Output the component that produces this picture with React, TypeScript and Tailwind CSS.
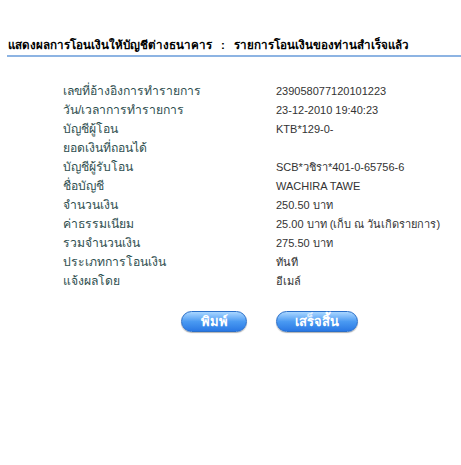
const rows: [string, string][] = [
  ['เลขที่อ้างอิงการทำรายการ', '239058077120101223'],
  ['วัน/เวลาการทำรายการ', '23-12-2010 19:40:23'],
  ['บัญชีผู้โอน', 'KTB*129-0-'],
  ['ยอดเงินที่ถอนได้', ''],
  ['บัญชีผู้รับโอน', 'SCB*วชิรา*401-0-65756-6'],
  ['ชื่อบัญชี', 'WACHIRA TAWE'],
  ['จำนวนเงิน', '250.50 บาท'],
  ['ค่าธรรมเนียม', '25.00 บาท (เก็บ ณ วันเกิดรายการ)'],
  ['รวมจำนวนเงิน', '275.50 บาท'],
  ['ประเภทการโอนเงิน', 'ทันที'],
  ['แจ้งผลโดย', 'อีเมล์'],
]

function PillButton({ label, width }: { label: string; width: string }) {
  return (
    <button
      className={`${width} h-[21px] rounded-full border border-[#2a6fc9] bg-gradient-to-b from-[#a9d6ff] via-[#4a9af2] to-[#2a78e4] text-white text-[13px] font-semibold leading-none shadow-[0_1px_1px_rgba(0,0,0,0.3)]`}
    >
      {label}
    </button>
  )
}

export default function App() {
  return (
    <div className="w-[461px] h-[465px] bg-white font-['Tahoma','Liberation_Sans',sans-serif]">
      <div className="pt-[37px] pl-[7px]">
        <h1 className="flex text-[11.6px] font-bold text-black leading-[16px] pl-px">
          <span>แสดงผลการโอนเงินให้บัญชีต่างธนาคาร</span>
          <span className="mx-[9px]">:</span>
          <span>รายการโอนเงินของท่านสำเร็จแล้ว</span>
        </h1>
        <div className="mt-[2px] h-[2px] bg-[#8db4e3]" />
      </div>

      <div className="mt-[25px] pl-[63px]">
        {rows.map(([label, value]) => (
          <div key={label} className="flex h-[19px] items-center">
            <div className="w-[213px] text-[12.2px] text-[#2f4f4f]">{label}</div>
            <div className="text-[11px] text-[#333]">{value}</div>
          </div>
        ))}
      </div>

      <div className="mt-[20px] flex gap-[29px] pl-[181px]">
        <PillButton label="พิมพ์" width="w-[66px]" />
        <PillButton label="เสร็จสิ้น" width="w-[82px]" />
      </div>
    </div>
  )
}
